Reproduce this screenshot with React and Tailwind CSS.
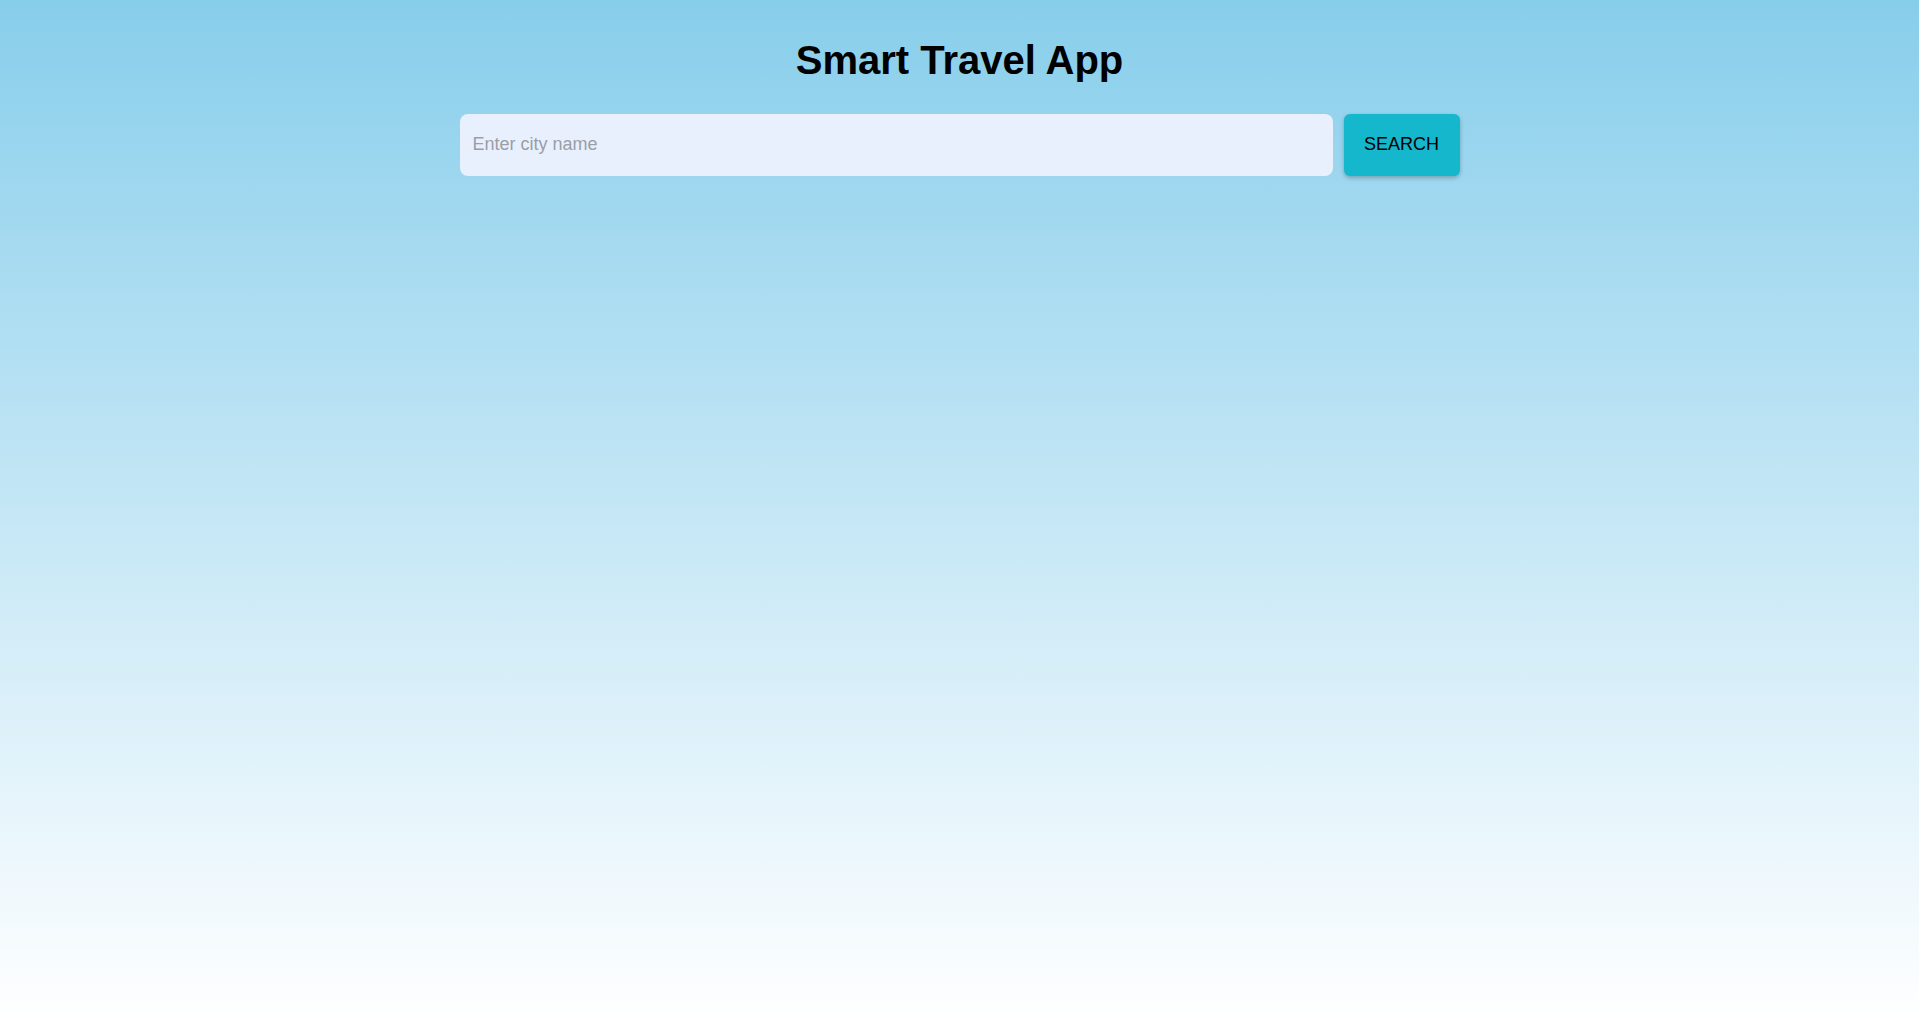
export default function App() {
  return (
    <div
      className="min-h-screen w-full bg-gradient-to-b from-[#87ceeb] to-white"
      style={{ fontFamily: '"Liberation Sans", Arial, sans-serif' }}
    >
      <div className="mx-auto flex max-w-[1000px] flex-col items-center pt-[37px]">
        <h1 className="text-[40px] font-bold leading-[46px] text-black">Smart Travel App</h1>

        {/* Search */}
        <div className="mt-[31px] flex w-full gap-[11px]">
          <input
            type="text"
            placeholder="Enter city name"
            className="h-[62px] flex-1 rounded-lg bg-[#e8f0fe] px-[13px] pb-[2px] text-[18px] text-black outline-none placeholder:text-[#9a9ea6]"
          />
          <button className="h-[62px] w-[116px] rounded-md bg-[#14b7cc] pb-[2px] text-[18px] text-black shadow-[0_2px_4px_rgba(0,0,0,0.25)]">
            SEARCH
          </button>
        </div>
      </div>
    </div>
  );
}
